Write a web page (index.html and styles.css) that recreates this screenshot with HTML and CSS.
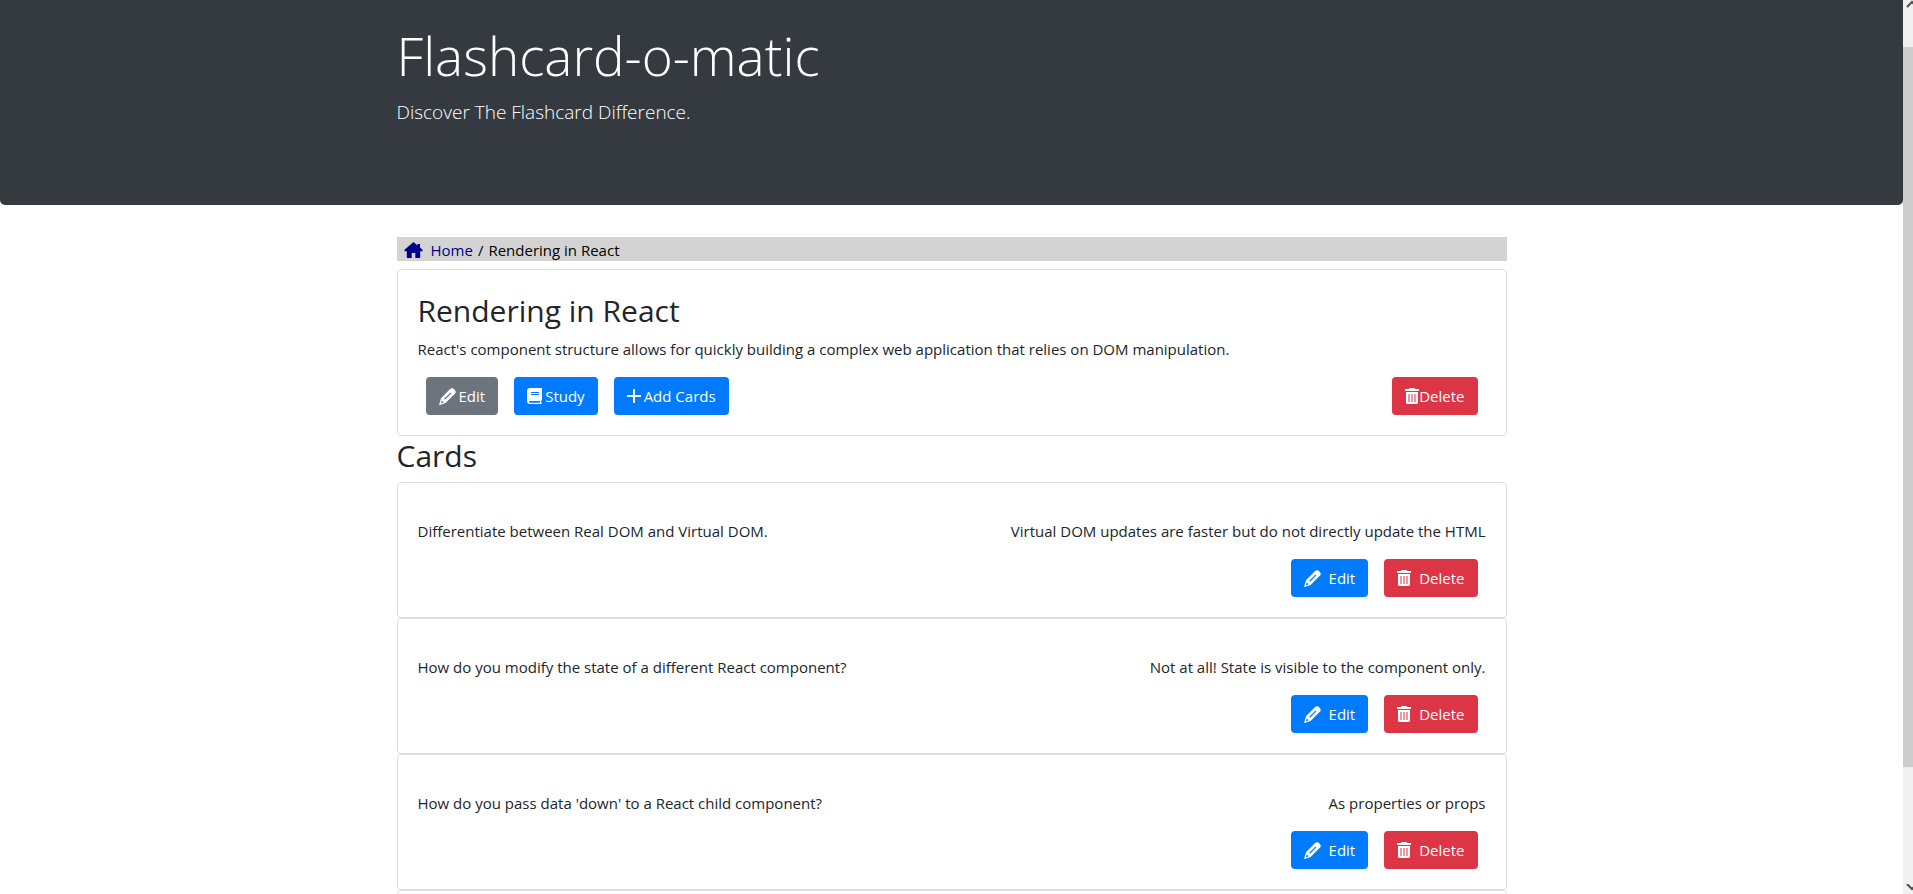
FILE: index.html
```html
<!DOCTYPE html>
<html lang="en">
<head>
<meta charset="utf-8">
<title>Flashcard-o-matic</title>
<link rel="stylesheet" href="styles.css">
</head>
<body>
<svg class="sprite" aria-hidden="true">
  <symbol id="i-home" viewBox="0 0 18 16"><path d="M9 0 0 7.800v1.400h2.300v6q0 .8.8.8h4.100v-5h3.600v5h4.100q.8 0 .8-.8v-6H18V7.800l-2.500-2.200V2H13v1.500z"/></symbol>
  <symbol id="i-pencil" viewBox="0 0 16 16"><path fill-rule="evenodd" d="M10.400 1Q12 -.4 13.500.5 15.200 1.800 15.700 3.200q.3 1.200-.8 2.300L6.200 14 .8 15.900Q0 16 .2 15.200L1.900 9.600zM4.900 10.200l.8.800 6-6-.8-.8zM2.700 11.700l-1 2.700 2.800-1z"/></symbol>
  <symbol id="i-book" viewBox="0 0 15 16"><path fill-rule="evenodd" d="M3 0H14.200q.8 0 .8.800v11q0 .7-.7.900v2.300q.7.200.7.600t-.6.400H3A3 3 0 0 1 0 13V3A3 3 0 0 1 3 0zM4 4v1h8V4zm0 2v1h8V6zM3 13a.9.900 0 0 0 0 1.800H13V13z"/></symbol>
  <symbol id="i-plus" viewBox="0 0 14 14"><path d="M6 0h2v6h6v2H8v6H6V8H0V6h6z"/></symbol>
  <symbol id="i-trash" viewBox="0 0 14 16"><path fill-rule="evenodd" d="M4.500 0h5l.5 1H14v2H0V1h4zM1 4h12v10.500q0 1.500-1.500 1.500h-9Q1 16 1 14.500zm2.500 2v8h1V6zm3 0v8h1V6zm3 0v8h1V6z"/></symbol>
</svg>
<div class="window">
  <div class="page">
    <header class="hero">
      <div class="container">
        <h1 class="hero-title">Flashcard-o-matic</h1>
        <p class="hero-lead">Discover The Flashcard Difference.</p>
      </div>
    </header>
    <main class="container">
      <nav class="crumbs" aria-label="Breadcrumb">
        <a class="crumb-link" href="#"><svg class="icon-home" aria-hidden="true"><use href="#i-home"/></svg>Home</a>
        <span>/</span>
        <span class="crumb-current">Rendering in React</span>
      </nav>
      <section class="card">
        <h2 class="heading">Rendering in React</h2>
        <p class="text">React's component structure allows for quickly building a complex web application that relies on DOM manipulation.</p>
        <div class="actions">
          <button class="btn btn-grey" type="button"><svg class="icon icon-pencil" aria-hidden="true"><use href="#i-pencil"/></svg>Edit</button>
          <button class="btn btn-blue" type="button"><svg class="icon icon-book" aria-hidden="true"><use href="#i-book"/></svg>Study</button>
          <button class="btn btn-blue" type="button"><svg class="icon icon-plus" aria-hidden="true"><use href="#i-plus"/></svg>Add Cards</button>
          <button class="btn btn-red btn-tight" type="button"><svg class="icon icon-trash" aria-hidden="true"><use href="#i-trash"/></svg>Delete</button>
        </div>
      </section>
      <h2 class="heading">Cards</h2>
      <article class="card card-row">
        <div class="qa"><p class="text">Differentiate between Real DOM and Virtual DOM.</p><p class="text">Virtual DOM updates are faster but do not directly update the HTML</p></div>
        <div class="actions actions-end">
          <button class="btn btn-blue btn-wide" type="button"><svg class="icon icon-pencil" aria-hidden="true"><use href="#i-pencil"/></svg>Edit</button>
          <button class="btn btn-red btn-wide" type="button"><svg class="icon icon-trash" aria-hidden="true"><use href="#i-trash"/></svg>Delete</button>
        </div>
      </article>
      <article class="card card-row">
        <div class="qa"><p class="text">How do you modify the state of a different React component?</p><p class="text">Not at all! State is visible to the component only.</p></div>
        <div class="actions actions-end">
          <button class="btn btn-blue btn-wide" type="button"><svg class="icon icon-pencil" aria-hidden="true"><use href="#i-pencil"/></svg>Edit</button>
          <button class="btn btn-red btn-wide" type="button"><svg class="icon icon-trash" aria-hidden="true"><use href="#i-trash"/></svg>Delete</button>
        </div>
      </article>
      <article class="card card-row">
        <div class="qa"><p class="text">How do you pass data 'down' to a React child component?</p><p class="text">As properties or props</p></div>
        <div class="actions actions-end">
          <button class="btn btn-blue btn-wide" type="button"><svg class="icon icon-pencil" aria-hidden="true"><use href="#i-pencil"/></svg>Edit</button>
          <button class="btn btn-red btn-wide" type="button"><svg class="icon icon-trash" aria-hidden="true"><use href="#i-trash"/></svg>Delete</button>
        </div>
      </article>
      <article class="card card-row"></article>
    </main>
  </div>
  <div class="scroll" aria-hidden="true">
    <svg class="scroll-arrow" viewBox="0 0 10 10"><path d="M4 7l5-5 5 5"/></svg>
    <div class="scroll-track"><div class="scroll-thumb"></div></div>
    <svg class="scroll-arrow" viewBox="0 0 10 10"><path d="M4 0l5 5 5-5"/></svg>
  </div>
</div>
</body>
</html>
```
FILE: styles.css
```css
* { box-sizing: border-box; }
body {
  margin: 0;
  background: #fff;
  color: #212529;
  font: 400 15px/24px "Open Sans", "Noto Sans", sans-serif;
}
h1, h2, p { margin: 0; }
.sprite { display: none; }
.window { display: flex; height: 100vh; overflow: hidden; }
.page { flex: 1; min-width: 0; }
.container { max-width: 1140px; margin: 0 auto; padding: 0 15px; }

.hero {
  padding: 22px 0 78px;
  margin-bottom: 32px;
  background: #343a40;
  color: #fff;
  border-radius: 0 0 5px 5px;
}
.hero-title { margin-bottom: 8px; font-size: 53px; line-height: 67px; font-weight: 300; }
.hero-lead { font-size: 19px; line-height: 30px; font-weight: 300; }

.crumbs {
  display: flex;
  gap: 5px;
  margin-bottom: 8px;
  padding: 2px 0 0 7px;
  line-height: 22px;
  background: #d3d3d3;
  color: #000;
}
.crumb-link { display: flex; align-items: center; gap: 8px; color: #00008b; text-decoration: none; }
.icon-home { width: 19px; height: 16px; fill: currentColor; }

.card { padding: 21px 20px 20px; border: 1px solid #dfdfdf; border-radius: 4px; background: #fff; }
.card-row { padding-top: 36px; }
.heading { margin-bottom: 6px; font-size: 30px; line-height: 40px; font-weight: 400; }
.text { margin-bottom: 16px; }
.qa { display: flex; justify-content: space-between; gap: 16px; }
.actions { display: flex; gap: 16px; padding: 0 8px; }
.actions-end { justify-content: flex-end; }
.btn {
  display: flex;
  align-items: center;
  gap: 3px;
  padding: 6px 12px;
  border: 1px solid transparent;
  border-radius: 4px;
  color: #fff;
  font: inherit;
}
.btn-grey { background: #6c757d; }
.btn-blue { background: #007bff; }
.btn-red { background: #dc3545; }
.btn-tight { gap: 0; margin-left: auto; }
.btn-wide { gap: 8px; }
.icon { width: 16px; height: 16px; fill: currentColor; }
.icon-pencil { width: 17px; height: 17px; }
.icon-book { width: 15px; }
.icon-plus { width: 14px; height: 14px; }
.icon-trash { width: 14px; }

.scroll { display: flex; flex-direction: column; width: 10px; background: #f0f0f0; }
.scroll-arrow { width: 10px; height: 10px; fill: none; stroke: #505050; stroke-width: 2; }
.scroll-track { flex: 1; padding-top: 37px; }
.scroll-thumb { height: 86%; background: #cdcdcd; }
```
